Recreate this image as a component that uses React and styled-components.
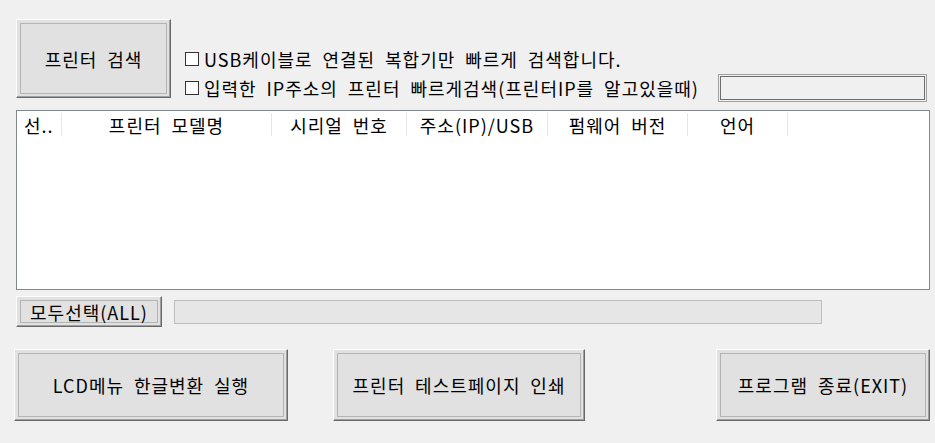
import React from "react"
import styled, { createGlobalStyle } from "styled-components"

const GlobalStyle = createGlobalStyle`
  html, body {
    margin: 0;
    padding: 0;
    background: #f0f0f0;
  }
  body {
    font-family: "Noto Sans CJK KR", "Noto Sans", sans-serif;
    color: #000;
  }
`

const Window = styled.div`
  box-sizing: border-box;
  width: 935px;
  height: 443px;
  padding: 19px 8px 0 0;
  background: #f0f0f0;
  display: flex;
  flex-direction: column;
`

const TopRow = styled.div`
  display: flex;
  align-items: flex-start;
  padding-left: 16px;
`

const Button = styled.button`
  box-sizing: border-box;
  flex: none;
  width: ${props => props.$w}px;
  height: ${props => props.$h}px;
  margin-left: ${props => props.$ml || 0}px;
  padding: 0;
  background: #e1e1e1;
  border: 1px solid;
  border-color: #fdfdfd #696969 #696969 #fdfdfd;
  box-shadow: inset -1px -1px 0 #a0a0a0, inset 0 0 0 3px #e1e1e1,
    inset 0 0 0 4px #b4b4b4;
  font-family: "Noto Sans CJK KR", sans-serif;
  font-size: 18px;
  line-height: 1;
  color: #000;
  letter-spacing: 1px;
  word-spacing: 0.27em;
  cursor: default;
`

const Options = styled.div`
  flex: 1;
  display: flex;
  flex-direction: column;
  margin: 25px 0 0 14px;
`

const OptionRow = styled.div`
  display: flex;
  align-items: center;
  height: ${props => props.$h || 29}px;
`

const CheckLabel = styled.label`
  display: flex;
  align-items: center;
  font-size: 18px;
  line-height: 1;
  letter-spacing: 1px;
  word-spacing: 0.27em;
  white-space: nowrap;
`

const Box = styled.span`
  box-sizing: border-box;
  width: 14px;
  height: 14px;
  margin-right: 5px;
  background: #fff;
  border: 1px solid #333;
`

const IpInput = styled.input`
  box-sizing: border-box;
  flex: none;
  width: 209px;
  height: 28px;
  margin-left: auto;
  padding: 0;
  background: #f0f0f0;
  border: 1px solid #a0a0a0;
  box-shadow: inset 0 0 0 1px #f0f0f0, inset 0 0 0 2px #6d6d6d;
  outline: none;
`

const ListView = styled.div`
  box-sizing: border-box;
  margin: 8px 0 0 16px;
  width: 914px;
  height: 180px;
  background: #fff;
  border: 1px solid #828790;
`

const Header = styled.div`
  display: flex;
  height: 26px;
  padding-top: 2px;
`

const Col = styled.div`
  box-sizing: border-box;
  flex: none;
  width: ${props => props.$w}px;
  height: 23px;
  padding-left: ${props => (props.$left ? 7 : 0)}px;
  display: flex;
  align-items: center;
  justify-content: ${props => (props.$left ? "flex-start" : "center")};
  border-right: 1px solid #e5e5e5;
  font-size: 18px;
  line-height: 1;
  letter-spacing: 1px;
  word-spacing: 0.27em;
  white-space: nowrap;
  overflow: hidden;
`

const ActionRow = styled.div`
  display: flex;
  align-items: center;
  margin: 6px 0 0 16px;
`

const Progress = styled.div`
  box-sizing: border-box;
  width: 648px;
  height: 24px;
  margin-left: 12px;
  background: #e6e6e6;
  border: 1px solid #bcbcbc;
`

const BottomRow = styled.div`
  display: flex;
  margin: 22px 0 0 14px;
`

const columns = [
  { title: "선..", w: 45, left: true },
  { title: "프린터 모델명", w: 210 },
  { title: "시리얼 번호", w: 135 },
  { title: "주소(IP)/USB", w: 141 },
  { title: "펌웨어 버전", w: 140 },
  { title: "언어", w: 100 },
]

export default function App() {
  return (
    <>
      <GlobalStyle />
      <Window>
        <TopRow>
          <Button $w={155} $h={79}>프린터 검색</Button>
          <Options>
            <OptionRow>
              <CheckLabel>
                <Box />
                USB케이블로 연결된 복합기만 빠르게 검색합니다.
              </CheckLabel>
            </OptionRow>
            <OptionRow>
              <CheckLabel>
                <Box />
                입력한 IP주소의 프린터 빠르게검색(프린터IP를 알고있을때)
              </CheckLabel>
              <IpInput />
            </OptionRow>
          </Options>
        </TopRow>

        <ListView>
          <Header>
            {columns.map(c => (
              <Col key={c.title} $w={c.w} $left={c.left}>
                {c.title}
              </Col>
            ))}
          </Header>
        </ListView>

        <ActionRow>
          <Button $w={146} $h={31}>모두선택(ALL)</Button>
          <Progress />
        </ActionRow>

        <BottomRow>
          <Button $w={274} $h={72}>LCD메뉴 한글변환 실행</Button>
          <Button $w={252} $h={72} $ml={45}>프린터 테스트페이지 인쇄</Button>
          <Button $w={214} $h={72} $ml={131}>프로그램 종료(EXIT)</Button>
        </BottomRow>
      </Window>
    </>
  )
}
